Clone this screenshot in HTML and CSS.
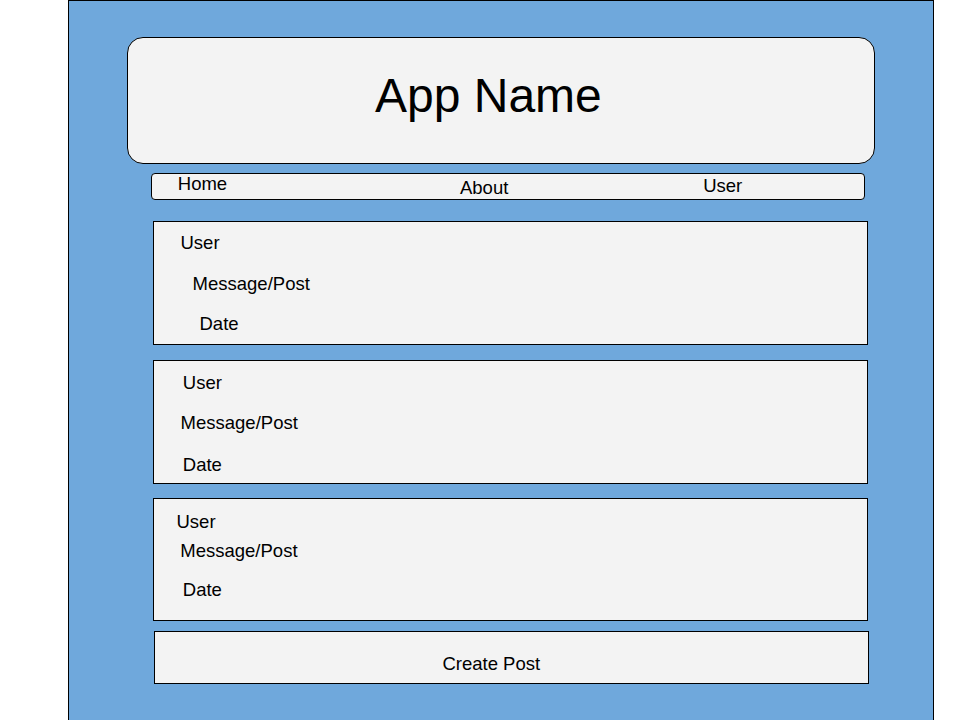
FILE: index.html
```html
<!DOCTYPE html>
<html lang="en">
<head>
<meta charset="utf-8">
<title>App Name</title>
<link rel="stylesheet" href="styles.css">
</head>
<body>
<main class="panel">
  <header class="app-header">
    <h1 class="app-title">App Name</h1>
  </header>
  <nav class="nav">
    <span class="nav-item nav-home">Home</span>
    <span class="nav-item nav-about">About</span>
    <span class="nav-item nav-user">User</span>
  </nav>
  <section class="post post-a">
    <div class="line user">User</div>
    <div class="line msg">Message/Post</div>
    <div class="line date">Date</div>
  </section>
  <section class="post post-b">
    <div class="line user">User</div>
    <div class="line msg">Message/Post</div>
    <div class="line date">Date</div>
  </section>
  <section class="post post-c">
    <div class="line user">User</div>
    <div class="line msg">Message/Post</div>
    <div class="line date">Date</div>
  </section>
  <div class="create">Create Post</div>
</main>
</body>
</html>
```

FILE: styles.css
```css
* { box-sizing: border-box; }

html, body {
  margin: 0;
  padding: 0;
  background: #ffffff;
}

body {
  font-family: "Liberation Sans", Arial, sans-serif;
  color: #000;
  font-size: 18.5px;
  width: 960px;
  height: 720px;
  overflow: hidden;
}

.panel {
  margin-left: 68px;
  width: 866px;
  height: 740px;
  background: #6fa8dc;
  border: 1px solid #000;
  padding-top: 36px;
}

.app-header {
  margin-left: 58px;
  width: 748px;
  height: 127px;
  background: #f3f3f3;
  border: 1px solid #000;
  border-radius: 16px;
  padding-top: 29.5px;
  padding-left: 247px;
}

.app-title {
  margin: 0;
  font-weight: normal;
  font-size: 48px;
  line-height: 56px;
}

.nav {
  margin-top: 9px;
  margin-left: 82px;
  width: 714px;
  height: 27px;
  background: #f3f3f3;
  border: 1px solid #000;
  border-radius: 4px;
  padding-left: 25.8px;
  display: grid;
  grid-template-columns: 282.2px 243.2px 1fr;
  align-items: start;
}

.nav-item {
  line-height: 20px;
  white-space: nowrap;
}
.nav-home { margin-top: 0; }
.nav-about { margin-top: 4.2px; }
.nav-user { margin-top: 1.9px; }

.post {
  margin-left: 84px;
  width: 715px;
  background: #f3f3f3;
  border: 1px solid #000;
}

.line {
  line-height: 20px;
  white-space: nowrap;
}

.post-a { margin-top: 21px; height: 124px; padding-top: 10.7px; }
.post-a .user { margin-left: 26.5px; }
.post-a .msg { margin-left: 38.6px; margin-top: 21.5px; }
.post-a .date { margin-left: 45.5px; margin-top: 20px; }

.post-b { margin-top: 15px; height: 124px; padding-top: 11.7px; }
.post-b .user { margin-left: 28.8px; }
.post-b .msg { margin-left: 26.6px; margin-top: 20.5px; }
.post-b .date { margin-left: 28.8px; margin-top: 22.3px; }

.post-c { margin-top: 14px; height: 123px; padding-top: 12.9px; }
.post-c .user { margin-left: 22.5px; }
.post-c .msg { margin-left: 26.3px; margin-top: 9.3px; }
.post-c .date { margin-left: 28.8px; margin-top: 19px; }

.create {
  margin-top: 10px;
  margin-left: 85px;
  width: 715px;
  height: 53px;
  background: #f3f3f3;
  border: 1px solid #000;
  padding-top: 21.5px;
  padding-left: 287.4px;
  line-height: 20px;
  white-space: nowrap;
}
```
